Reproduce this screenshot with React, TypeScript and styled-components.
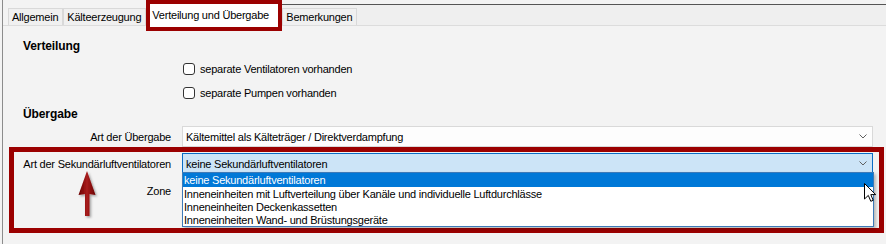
import React from 'react';
import styled, { createGlobalStyle } from 'styled-components';

const GlobalStyle = createGlobalStyle`
  html, body {
    margin: 0;
    padding: 0;
    background: #f3f3f3;
  }
  body {
    font-family: "Liberation Sans", Arial, sans-serif;
    font-size: 11px;
    letter-spacing: -0.22px;
    color: #000;
  }
`;

const ANNOTATION = '#9b0000';

const Window = styled.div`
  width: 886px;
  height: 244px;
  overflow: hidden;
  background: #f3f3f3;
  padding-left: 2px;
  box-sizing: border-box;
`;

const Frame = styled.div`
  height: 100%;
  border-left: 1px solid #8c8c8c;
  display: flex;
  flex-direction: column;
`;

const TabBar = styled.div`
  height: 26px;
  flex: none;
  box-sizing: border-box;
  border-bottom: 1px solid #dcdcdc;
  display: flex;
  align-items: flex-start;
  padding-left: 5px;
  position: relative;
  z-index: 2;
`;

const Tab = styled.div<{ $top?: number }>`
  margin-top: ${({ $top = 8 }) => $top}px;
  height: 17px;
  box-sizing: border-box;
  border: 1px solid #d9d9d9;
  border-bottom: none;
  background: #f0f0f0;
  padding: 0 4px 0 3px;
  line-height: 16px;
  white-space: nowrap;
`;

const ActiveTab = styled.div`
  width: 136px;
  height: 31px;
  flex: none;
  box-sizing: border-box;
  border: 4px solid ${ANNOTATION};
  background: #fff;
  padding: 3px 0 0 2px;
  line-height: 16px;
  white-space: nowrap;
`;

const TabFiller = styled.div`
  flex: 1;
  height: 21px;
  margin-top: 4px;
  box-sizing: border-box;
  border-top: 1px solid #555;
  background: #efefef;
  display: flex;
  align-items: flex-start;
`;

const Panel = styled.div`
  flex: 1;
  padding: 12px 2px 0 6px;
  display: flex;
  flex-direction: column;
`;

const SectionTitle = styled.div<{ $gap?: number }>`
  margin-top: ${({ $gap = 0 }) => $gap}px;
  padding-left: 14px;
  height: 16px;
  line-height: 16px;
  font-size: 12px;
  font-weight: bold;
  letter-spacing: -0.1px;
`;

const FormRow = styled.div<{ $height?: number; $gap?: number }>`
  display: grid;
  grid-template-columns: 148px 691px;
  column-gap: 11px;
  align-items: center;
  padding-left: 14px;
  height: ${({ $height = 21 }) => $height}px;
  margin-top: ${({ $gap = 0 }) => $gap}px;
`;

const Label = styled.div`
  text-align: right;
  white-space: nowrap;
`;

const CheckLine = styled.label`
  display: flex;
  align-items: center;
  gap: 5px;
  padding-left: 1px;
  white-space: nowrap;
`;

const CheckBox = styled.span`
  width: 12px;
  height: 12px;
  box-sizing: border-box;
  border: 1px solid #333;
  border-radius: 3px;
  background: #fff;
`;

const Combo = styled.div<{ $active?: boolean }>`
  position: relative;
  height: 21px;
  box-sizing: border-box;
  border: 1px solid ${({ $active }) => ($active ? '#0a6cc4' : '#d9d9d9')};
  background: ${({ $active }) => ($active ? '#cce4f7' : '#fdfdfd')};
  display: flex;
  align-items: center;
  justify-content: space-between;
  padding: 0 5px 0 3px;
  white-space: nowrap;
  z-index: ${({ $active }) => ($active ? 3 : 1)};
`;

const Chevron = () => (
  <svg width="8" height="5" viewBox="0 0 8 5">
    <path d="M0.5 0.5 L4 4 L7.5 0.5" fill="none" stroke="#606060" strokeWidth="1" />
  </svg>
);

const DropList = styled.div`
  position: absolute;
  left: -1px;
  top: calc(100% - 1px);
  width: 692px;
  height: 55px;
  box-sizing: border-box;
  border: 1px solid #3d7ab8;
  background: #fff;
  box-shadow: 2px 2px 3px rgba(0, 0, 0, 0.25);
`;

const DropItem = styled.div<{ $selected?: boolean }>`
  height: ${({ $selected }) => ($selected ? 14 : 13)}px;
  line-height: ${({ $selected }) => ($selected ? 15 : 14)}px;
  padding-left: 1px;
  white-space: nowrap;
  background: ${({ $selected }) => ($selected ? '#0078d7' : 'transparent')};
  color: ${({ $selected }) => ($selected ? '#fff' : '#000')};
`;

const Pointer = styled.svg`
  position: absolute;
  left: 681px;
  top: 10px;
`;

const HighlightBox = styled.div`
  position: relative;
  width: 875px;
  height: 86px;
  box-sizing: border-box;
  border: 5px solid ${ANNOTATION};
  padding-top: 1px;
  & > ${FormRow} {
    padding-left: 9px;
  }
`;

const UpArrow = styled.svg`
  position: absolute;
  left: 63px;
  top: 18px;
  z-index: 4;
`;

const items = [
  'keine Sekundärluftventilatoren',
  'Inneneinheiten mit Luftverteilung über Kanäle und individuelle Luftdurchlässe',
  'Inneneinheiten Deckenkassetten',
  'Inneneinheiten Wand- und Brüstungsgeräte',
];

export default function App() {
  return (
    <>
      <GlobalStyle />
      <Window>
        <Frame>
          <TabBar>
            <Tab>Allgemein</Tab>
            <Tab>Kälteerzeugung</Tab>
            <ActiveTab>Verteilung und Übergabe</ActiveTab>
            <TabFiller>
              <Tab $top={3}>Bemerkungen</Tab>
            </TabFiller>
          </TabBar>
          <Panel>
            <SectionTitle>Verteilung</SectionTitle>
            <FormRow $height={24} $gap={3}>
              <span />
              <CheckLine>
                <CheckBox />
                separate Ventilatoren vorhanden
              </CheckLine>
            </FormRow>
            <FormRow $height={24}>
              <span />
              <CheckLine>
                <CheckBox />
                separate Pumpen vorhanden
              </CheckLine>
            </FormRow>
            <SectionTitle $gap={1}>Übergabe</SectionTitle>
            <FormRow $gap={4}>
              <Label>Art der Übergabe</Label>
              <Combo>
                Kältemittel als Kälteträger / Direktverdampfung
                <Chevron />
              </Combo>
            </FormRow>
            <HighlightBox>
              <FormRow>
                <Label>Art der Sekundärluftventilatoren</Label>
                <Combo $active>
                  keine Sekundärluftventilatoren
                  <Chevron />
                  <DropList>
                    {items.map((t, i) => (
                      <DropItem key={t} $selected={i === 0}>
                        {t}
                      </DropItem>
                    ))}
                    <Pointer width="13" height="20" viewBox="0 0 13 20">
                      <path
                        d="M0.5 0.5 L0.5 16 L4.3 12.4 L6.8 18.3 L9.2 17.3 L6.8 11.6 L11.7 11.6 Z"
                        fill="#fff"
                        stroke="#000"
                        strokeWidth="1"
                        strokeLinejoin="miter"
                      />
                    </Pointer>
                  </DropList>
                </Combo>
              </FormRow>
              <FormRow $gap={6}>
                <Label>Zone</Label>
                <Combo />
              </FormRow>
              <UpArrow width="24" height="50" viewBox="0 0 24 50">
                <defs>
                  <linearGradient id="arrowFill" x1="0" x2="1" y1="0" y2="0">
                    <stop offset="0" stopColor="#6a0000" />
                    <stop offset="0.5" stopColor="#a81c1c" />
                    <stop offset="1" stopColor="#6a0000" />
                  </linearGradient>
                  <filter id="arrowShadow" x="-50%" y="-50%" width="200%" height="200%">
                    <feDropShadow dx="1.5" dy="1.5" stdDeviation="1" floodColor="#000" floodOpacity="0.35" />
                  </filter>
                </defs>
                <path
                  d="M10 1 L18.5 25 L12.5 24 L12.5 46 L8 46 L8 24 L1.5 25 Z"
                  fill="url(#arrowFill)"
                  filter="url(#arrowShadow)"
                />
              </UpArrow>
            </HighlightBox>
          </Panel>
        </Frame>
      </Window>
    </>
  );
}
